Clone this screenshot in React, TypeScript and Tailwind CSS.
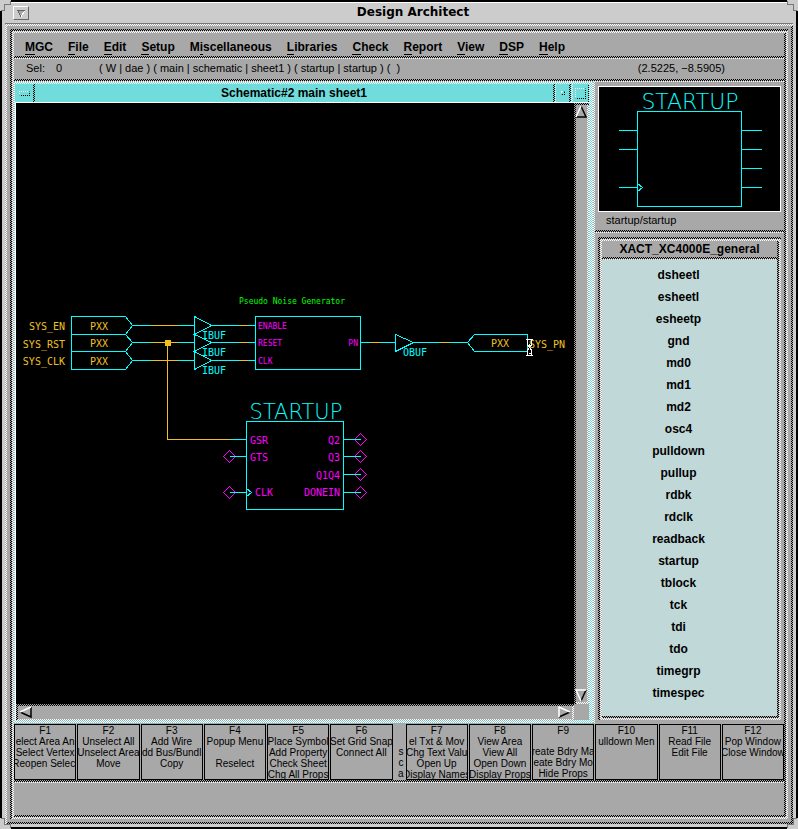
import type { ReactNode } from 'react';
import clsx from 'clsx';

const LIGHT = 'bg-[repeating-conic-gradient(#fff_0_25%,#a8a8a8_0_50%)] bg-[length:2px_2px]';
const DARK = 'bg-[repeating-conic-gradient(#000_0_25%,#a8a8a8_0_50%)] bg-[length:2px_2px]';
const CYAN_LIGHT = 'bg-[repeating-conic-gradient(#fff_0_25%,#70dcdc_0_50%)] bg-[length:2px_2px]';
const CYAN_DARK = 'bg-[repeating-conic-gradient(#000_0_25%,#70dcdc_0_50%)] bg-[length:2px_2px]';

const MENUS = [
  'MGC', 'File', 'Edit', 'Setup', 'Miscellaneous', 'Libraries',
  'Check', 'Report', 'View', 'DSP', 'Help',
];

// Index of the underlined letter where it is not the first one
const MNEMONICS: Record<string, number> = { Miscellaneous: 1 };

const PARTS = [
  'dsheetl', 'esheetl', 'esheetp', 'gnd', 'md0', 'md1', 'md2', 'osc4', 'pulldown', 'pullup',
  'rdbk', 'rdclk', 'readback', 'startup', 'tblock', 'tck', 'tdi', 'tdo', 'timegrp', 'timespec',
];

const KEYS_LEFT = [
  { name: 'F1', lines: ['elect Area An', 'Select Vertex', 'Reopen Select'] },
  { name: 'F2', lines: ['Unselect All', 'Unselect Area', 'Move'] },
  { name: 'F3', lines: ['Add Wire', 'dd Bus/Bundl', 'Copy'] },
  { name: 'F4', lines: ['Popup Menu', '', 'Reselect'] },
  { name: 'F5', lines: ['Place Symbol', 'Add Property', 'Check Sheet', 'Chg All Props'] },
  { name: 'F6', lines: ['Set Grid Snap', 'Connect All'] },
];

const KEYS_RIGHT = [
  { name: 'F7', lines: ['el Txt & Mov', 'Chg Text Valu', 'Open Up', 'Display Names'] },
  { name: 'F8', lines: ['View Area', 'View All', 'Open Down', 'Display Props'] },
  { name: 'F9', lines: ['', 'reate Bdry Ma', 'eate Bdry Mo', 'Hide Props'] },
  { name: 'F10', lines: ['ulldown Men'] },
  { name: 'F11', lines: ['Read File', 'Edit File'] },
  { name: 'F12', lines: ['Pop Window', 'Close Window'] },
];

type BevelProps = { sunken?: boolean; className?: string; children?: ReactNode };

function Bevel({ sunken, className, children }: BevelProps) {
  return (
    <div className={clsx('flex min-w-0 flex-1 flex-col pt-0.5 pl-0.5', sunken ? DARK : LIGHT)}>
      <div className={clsx('flex min-w-0 flex-1 flex-col pr-0.5 pb-0.5', sunken ? LIGHT : DARK)}>
        <div className={clsx('flex min-w-0 flex-1 flex-col bg-[#a8a8a8]', className)}>{children}</div>
      </div>
    </div>
  );
}

function Rule() {
  return (
    <div className="shrink-0">
      <div className={clsx('h-0.5', DARK)} />
      <div className={clsx('h-px', LIGHT)} />
    </div>
  );
}

function Corner({ className }: { className: string }) {
  return (
    <svg className={clsx('absolute h-[11px] w-[11px]', className)} viewBox="0 0 11 11" shapeRendering="crispEdges">
      <path d="M0 0h11v4H4v7H0z" fill="#ccc" />
      <path d="M10 1h1v4H5v6H1v-1h3V4h6z" fill="#777" />
    </svg>
  );
}

function TitleBar() {
  return (
    <header className="flex h-[22px] shrink-0 items-center border-t border-b border-t-white border-b-[#777] pl-2">
      <button aria-label="Window menu" className="flex h-[14px] w-4 items-center justify-center border border-t-white border-r-[#666] border-b-[#666] border-l-white">
        <svg width="8" height="7" viewBox="0 0 8 7" shapeRendering="crispEdges">
          <path d="M0 0h8L4 7z" fill="#a8a8a8" />
          <path d="M0 0.5h8M0.5 0l3.5 7" stroke="#666" fill="none" />
          <path d="M7.5 1L4 7" stroke="#fff" fill="none" />
        </svg>
      </button>
      <h1 className="flex-1 pb-0.5 pl-1 text-center font-['DejaVu_Sans',sans-serif] text-[12px] leading-4 font-bold">
        Design Architect
      </h1>
    </header>
  );
}

function MenuBar() {
  return (
    <nav className="flex h-[23px] shrink-0 items-center gap-[15px] pt-1 pl-[11px] text-[12px] font-bold">
      {MENUS.map((label) => {
        const i = MNEMONICS[label] ?? 0;
        return (
          <button key={label} className="leading-4">
            {label.slice(0, i)}
            <span className="border-b border-black">{label[i]}</span>
            {label.slice(i + 1)}
          </button>
        );
      })}
    </nav>
  );
}

function StatusLine() {
  return (
    <div className="flex h-5 shrink-0 items-center pr-[59px] pb-0.5 pl-3 text-[11px] leading-4 whitespace-pre">
      <span className="w-[30px]">Sel:</span>
      <span className="w-[43px]">0</span>
      <span className="flex-1">{'( W | dae ) ( main | schematic | sheet1 ) ( startup | startup ) (  )'}</span>
      <span>(2.5225, −8.5905)</span>
    </div>
  );
}

const MONO = "font-['DejaVu_Sans_Mono',monospace]";
const VECTOR = "font-['DejaVu_Sans',sans-serif] font-extralight";

function Hourglass() {
  return (
    <g stroke="#fff" fill="none">
      <path d="M526 339.5h7M526 355.5h7" />
      <path d="M527.5 340v5l2 2.5 2-2.5v-5M527.5 355v-5l2-2.5 2 2.5v5" />
      <path d="M529.5 344v4M528.5 353.5h3" />
    </g>
  );
}

function Schematic() {
  const rows = [325, 342, 360];
  return (
    <svg className="h-full w-full" shapeRendering="crispEdges" aria-label="Schematic sheet">
      <g transform="translate(-15.5 -102.5)" fill="none" stroke="#00ffff">
        {/* Input pads */}
        <path d="M125 316H71v53h54M71 334h54M71 351h54" />
        <path d="M125 316l7 9-7 9 7 8-7 9 7 9-7 9" />

        {/* Input buffers and nets */}
        <path d="M194 316v53M194 316l17 9-17 9 17 8-17 9 17 9-17 9" />
        {rows.map((y) => (
          <g key={y}>
            <path d={`M132 ${y}h62M211 ${y}h44`} />
            <path d={`M150 ${y}h27M238 ${y}h9`} stroke="#f0c020" />
          </g>
        ))}
        <path d="M167 343v96h63" stroke="#f0c020" />
        <path d="M230 439h16" />
        <path d="M165 340h5v5h-5z" fill="#f0c020" stroke="#f0c020" />

        {/* Noise generator */}
        <path d="M255 316h105v53H255zM360 342h35M395 334v17l18-9zM413 342h54" />
        <path d="M369 342h10M439 342h10" stroke="#f0c020" />
        <path d="M467 342l7-8h53v17h-53z" />

        {/* Startup block */}
        <path d="M246 421h97v88h-97zM246 488l5 4-5 4" />
        <g stroke="#ff00ff">
          <path d="M229 450l6 6-6 6-6-6zM229 486l6 6-6 6-6-6z" />
          {[439, 456, 474, 492].map((y) => (
            <path key={y} d={`M360 ${y - 6}l6 6-6 6-6-6z`} />
          ))}
        </g>
        <path d="M229 456h17M229 492h17M343 439h17M343 456h17M343 474h17M343 492h17" />
      </g>

      <g transform="translate(-16 -103)">
        <g className={clsx(MONO, 'text-[10px]')} fill="#f0c020">
          <text x="65" y="330" textAnchor="end">SYS_EN</text>
          <text x="65" y="348" textAnchor="end">SYS_RST</text>
          <text x="65" y="365" textAnchor="end">SYS_CLK</text>
          <text x="90" y="330">PXX</text>
          <text x="90" y="347">PXX</text>
          <text x="90" y="365">PXX</text>
          <text x="491" y="347">PXX</text>
          <text x="529" y="348">SYS_PN</text>
        </g>
        <g className={clsx(MONO, 'text-[10px]')} fill="#00ffff">
          <text x="202" y="339">IBUF</text>
          <text x="202" y="356">IBUF</text>
          <text x="202" y="374">IBUF</text>
          <text x="403" y="356">OBUF</text>
        </g>
        <text x="239" y="304" className={clsx(MONO, 'text-[8px]')} fill="#00ff00">
          Pseudo Noise Generator
        </text>
        <g className={clsx(MONO, 'text-[8px]')} fill="#ff00ff">
          <text x="258" y="329">ENABLE</text>
          <text x="258" y="346">RESET</text>
          <text x="258" y="364">CLK</text>
          <text x="358" y="346" textAnchor="end">PN</text>
        </g>
        <g className={clsx(MONO, 'text-[10px]')} fill="#ff00ff">
          <text x="250" y="444">GSR</text>
          <text x="250" y="461">GTS</text>
          <text x="255" y="496">CLK</text>
          <text x="340" y="444" textAnchor="end">Q2</text>
          <text x="340" y="461" textAnchor="end">Q3</text>
          <text x="340" y="479" textAnchor="end">Q1Q4</text>
          <text x="340" y="496" textAnchor="end">DONEIN</text>
        </g>
        <text x="296" y="419" textAnchor="middle" className={clsx(VECTOR, 'text-[21px]')} fill="#00ffff">
          STARTUP
        </text>
        <Hourglass />
      </g>
    </svg>
  );
}

// Lit and shaded edges of each scroll arrow, light from the upper left
const ARROWS = {
  up: { fill: 'M6 1l5 11H1z', lit: 'M6 1L1 12', shade: 'M6 1l5 11H1' },
  down: { fill: 'M1 1h10L6 12z', lit: 'M11 1H1l5 11', shade: 'M11 1L6 12' },
  left: { fill: 'M1 6l11-5v10z', lit: 'M1 6l11-5', shade: 'M12 1v10L1 6' },
  right: { fill: 'M1 1l11 5-11 5z', lit: 'M12 6L1 1v10', shade: 'M12 6L1 11' },
};

function ScrollArrow({ direction }: { direction: keyof typeof ARROWS }) {
  const arrow = ARROWS[direction];
  return (
    <button aria-label={`Scroll ${direction}`} className="flex shrink-0">
      <svg width="13" height="13" viewBox="0 0 13 13" fill="none">
        <path d={arrow.fill} fill="#a8a8a8" />
        <path d={arrow.shade} stroke="#000" strokeWidth="1.5" />
        <path d={arrow.lit} stroke="#fff" strokeWidth="1.5" />
      </svg>
    </button>
  );
}

function SchematicWindow() {
  return (
    <section className={clsx('flex min-w-0 flex-1 flex-col pt-0.5 pr-1 pb-[3px] pl-px', CYAN_LIGHT)}>
      <div className="flex h-[19px] shrink-0 border-b border-white bg-[#70dcdc]">
        <button aria-label="Sheet menu" className="flex w-[18px] items-center justify-center">
          <span className="h-[5px] w-[11px] border border-dotted border-t-white border-r-black border-b-black border-l-white" />
        </button>
        <div className={clsx('w-0.5', CYAN_DARK)} />
        <h2 className="flex-1 text-center text-[12px] leading-[18px] font-bold">Schematic#2 main sheet1</h2>
        <div className={clsx('w-0.5', CYAN_DARK)} />
        <div className={clsx('w-px', CYAN_LIGHT)} />
        <button aria-label="Minimize" className="flex w-[13px] items-center justify-center">
          <span className="h-1 w-1 border border-dotted border-t-white border-r-black border-b-black border-l-white" />
        </button>
        <div className={clsx('w-0.5', CYAN_DARK)} />
        <div className={clsx('w-0.5', CYAN_LIGHT)} />
        <button aria-label="Maximize" className="flex w-[15px] items-center justify-center">
          <span className="h-[11px] w-[11px] border border-dotted border-t-white border-r-black border-b-black border-l-white" />
        </button>
        <div className={clsx('w-px', CYAN_DARK)} />
      </div>
      <div className="flex min-h-0 flex-1 border-l border-white">
        <div className="min-w-0 flex-1 bg-black">
          <Schematic />
        </div>
        <div className="flex w-[15px] shrink-0">
          <Bevel sunken className="items-center justify-between">
            <ScrollArrow direction="up" />
            <ScrollArrow direction="down" />
          </Bevel>
        </div>
      </div>
      <div className="flex h-4 shrink-0 border-l border-white">
        <Bevel sunken>
          <div className="flex flex-1 items-center justify-between px-px">
            <ScrollArrow direction="left" />
            <ScrollArrow direction="right" />
          </div>
        </Bevel>
        <div className="w-[15px] bg-[#a8a8a8]" />
      </div>
    </section>
  );
}

function Preview() {
  return (
    <div className="px-[3px] pt-1">
      <div className="h-[126px] border border-white bg-black">
        <svg className="h-full w-full" viewBox="599 87 181 124" shapeRendering="crispEdges" aria-label="startup symbol">
          <g transform="translate(0.5 0.5)" fill="none" stroke="#00ffff">
            <path d="M637 111h104v95H637zM637 183l5 4-5 4" />
            <path d="M618 130h19M618 149h19M618 187h19M741 130h20M741 149h20M741 168h20M741 187h20" />
          </g>
          <text x="690" y="109" textAnchor="middle" className={clsx(VECTOR, 'text-[22px]')} fill="#00ffff">
            STARTUP
          </text>
        </svg>
      </div>
      <p className="pb-0.5 pl-2 text-[11px] leading-4">startup/startup</p>
    </div>
  );
}

function Palette() {
  return (
    <Bevel sunken>
      <Bevel>
        <h2 className="h-4 shrink-0 text-center text-[12px] leading-4 font-bold">XACT_XC4000E_general</h2>
        <Rule />
        <ul className="flex-1 bg-[#c0d8d8] pt-1 pr-[22px]">
          {PARTS.map((part) => (
            <li key={part}>
              <button className="block w-full text-center text-[12px] leading-[22px] font-bold">{part}</button>
            </li>
          ))}
        </ul>
      </Bevel>
    </Bevel>
  );
}

function FunctionKey({ name, lines }: { name: string; lines: string[] }) {
  return (
    <button className="flex h-14 min-w-0 flex-1 flex-col items-center overflow-hidden border border-black text-[10px] leading-[11px] whitespace-pre">
      <span>{name}</span>
      {lines.map((line, i) => (
        <span key={i} className="h-[11px]">{line}</span>
      ))}
    </button>
  );
}

export default function App() {
  return (
    <div className="relative flex min-h-screen flex-col bg-black p-0.5 font-['Liberation_Sans',Arial,sans-serif] text-black">
      <div className="flex flex-1 flex-col bg-[#ccc] px-[3px] pb-[3px]">
        <TitleBar />
        <Bevel className="p-[3px]">
          <Bevel sunken>
            <Bevel>
              <MenuBar />
              <Rule />
              <StatusLine />
              <Rule />
              <main className="flex flex-1">
                <SchematicWindow />
                <aside className="flex w-[191px] shrink-0">
                  <div className={clsx('w-0.5', LIGHT)} />
                  <div className="flex min-w-0 flex-1 flex-col">
                    <Preview />
                    <Rule />
                    <div className="flex flex-1 flex-col px-[3px] pt-1 pb-[3px]">
                      <Palette />
                    </div>
                  </div>
                </aside>
              </main>
              <div className="h-px bg-[#a8a8a8]" />
              <div className="flex shrink-0 gap-px">
                {KEYS_LEFT.map((key) => (
                  <FunctionKey key={key.name} {...key} />
                ))}
                <div className="w-[11px] pt-[22px] pr-px text-right text-[10px] leading-[11px]">
                  <p>s</p>
                  <p>c</p>
                  <p>a</p>
                </div>
                {KEYS_RIGHT.map((key) => (
                  <FunctionKey key={key.name} {...key} />
                ))}
              </div>
              <Rule />
              <div className="h-8 shrink-0" />
            </Bevel>
          </Bevel>
        </Bevel>
      </div>
      <Corner className="top-0 left-0" />
      <Corner className="top-0 right-0 rotate-90" />
      <Corner className="right-0 bottom-0 rotate-180" />
      <Corner className="bottom-0 left-0 -rotate-90" />
    </div>
  );
}
